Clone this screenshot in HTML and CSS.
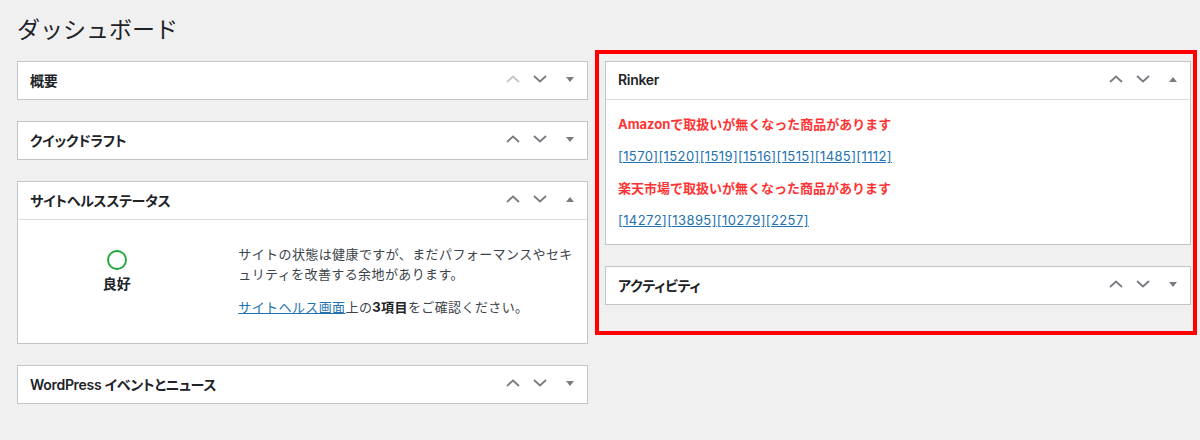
FILE: index.html
```html
<!DOCTYPE html>
<html lang="ja">
<head>
    <meta charset="UTF-8">
    <title>ダッシュボード</title>
    <link rel="stylesheet" href="styles.css">
</head>
<body>
<div class="wrap">
    <h1>ダッシュボード</h1>
    <div class="dashboard">
        <div class="column">
            <div class="postbox">
                <div class="postbox-header">
                    <h2>概要</h2>
                    <div class="handle-actions">
                        <span class="order-btn disabled"><svg width="14" height="8" viewBox="0 0 14 8"><polyline points="1,7 7,1.5 13,7"/></svg></span>
                        <span class="order-btn"><svg width="14" height="8" viewBox="0 0 14 8"><polyline points="1,1 7,6.5 13,1"/></svg></span>
                        <span class="toggle-btn"><svg width="8" height="5" viewBox="0 0 8 5"><polygon points="0,0 8,0 4,5"/></svg></span>
                    </div>
                </div>
            </div>
            <div class="postbox">
                <div class="postbox-header">
                    <h2>クイックドラフト</h2>
                    <div class="handle-actions">
                        <span class="order-btn"><svg width="14" height="8" viewBox="0 0 14 8"><polyline points="1,7 7,1.5 13,7"/></svg></span>
                        <span class="order-btn"><svg width="14" height="8" viewBox="0 0 14 8"><polyline points="1,1 7,6.5 13,1"/></svg></span>
                        <span class="toggle-btn"><svg width="8" height="5" viewBox="0 0 8 5"><polygon points="0,0 8,0 4,5"/></svg></span>
                    </div>
                </div>
            </div>
            <div class="postbox">
                <div class="postbox-header open">
                    <h2>サイトヘルスステータス</h2>
                    <div class="handle-actions">
                        <span class="order-btn"><svg width="14" height="8" viewBox="0 0 14 8"><polyline points="1,7 7,1.5 13,7"/></svg></span>
                        <span class="order-btn"><svg width="14" height="8" viewBox="0 0 14 8"><polyline points="1,1 7,6.5 13,1"/></svg></span>
                        <span class="toggle-btn"><svg width="8" height="5" viewBox="0 0 8 5"><polygon points="0,5 8,5 4,0"/></svg></span>
                    </div>
                </div>
                <div class="health-widget">
                    <div class="health-status">
                        <svg class="health-ring" width="20" height="20" viewBox="0 0 20 20"><circle cx="10" cy="10" r="9"/></svg>
                        <div class="health-label">良好</div>
                    </div>
                    <div class="health-text">
                        <p>サイトの状態は健康ですが、まだパフォーマンスやセキュリティを改善する余地があります。</p>
                        <p><a href="#">サイトヘルス画面</a>上の<strong>3項目</strong>をご確認ください。</p>
                    </div>
                </div>
            </div>
            <div class="postbox">
                <div class="postbox-header">
                    <h2>WordPress イベントとニュース</h2>
                    <div class="handle-actions">
                        <span class="order-btn"><svg width="14" height="8" viewBox="0 0 14 8"><polyline points="1,7 7,1.5 13,7"/></svg></span>
                        <span class="order-btn"><svg width="14" height="8" viewBox="0 0 14 8"><polyline points="1,1 7,6.5 13,1"/></svg></span>
                        <span class="toggle-btn"><svg width="8" height="5" viewBox="0 0 8 5"><polygon points="0,0 8,0 4,5"/></svg></span>
                    </div>
                </div>
            </div>
        </div>

        <!-- 赤枠で囲んだ右カラム -->
        <div class="column highlight">
            <div class="postbox">
                <div class="postbox-header open">
                    <h2>Rinker</h2>
                    <div class="handle-actions">
                        <span class="order-btn"><svg width="14" height="8" viewBox="0 0 14 8"><polyline points="1,7 7,1.5 13,7"/></svg></span>
                        <span class="order-btn"><svg width="14" height="8" viewBox="0 0 14 8"><polyline points="1,1 7,6.5 13,1"/></svg></span>
                        <span class="toggle-btn"><svg width="8" height="5" viewBox="0 0 8 5"><polygon points="0,5 8,5 4,0"/></svg></span>
                    </div>
                </div>
                <div class="rinker-body">
                    <p class="warning">Amazonで取扱いが無くなった商品があります</p>
                    <p class="items"><a href="#">[1570]</a><a href="#">[1520]</a><a href="#">[1519]</a><a href="#">[1516]</a><a href="#">[1515]</a><a href="#">[1485]</a><a href="#">[1112]</a></p>
                    <p class="warning">楽天市場で取扱いが無くなった商品があります</p>
                    <p class="items"><a href="#">[14272]</a><a href="#">[13895]</a><a href="#">[10279]</a><a href="#">[2257]</a></p>
                </div>
            </div>
            <div class="postbox">
                <div class="postbox-header">
                    <h2>アクティビティ</h2>
                    <div class="handle-actions">
                        <span class="order-btn"><svg width="14" height="8" viewBox="0 0 14 8"><polyline points="1,7 7,1.5 13,7"/></svg></span>
                        <span class="order-btn"><svg width="14" height="8" viewBox="0 0 14 8"><polyline points="1,1 7,6.5 13,1"/></svg></span>
                        <span class="toggle-btn"><svg width="8" height="5" viewBox="0 0 8 5"><polygon points="0,0 8,0 4,5"/></svg></span>
                    </div>
                </div>
            </div>
        </div>
    </div>
</div>
</body>
</html>
```

FILE: styles.css
```css
body {
    margin: 0;
    background-color: #f0f0f1;
    color: #3c434a;
    font-family: 'Inter', 'Noto Sans CJK JP', sans-serif;
    font-size: 13px;
}

.wrap {
    padding-left: 17px;
}

h1 {
    margin: 0;
    padding-top: 15px;
    font-size: 23px;
    font-weight: 400;
    line-height: 30px;
    color: #1d2327;
}

.dashboard {
    display: flex;
    align-items: flex-start;
    margin-top: 5px;
}

.column {
    width: 571px;
    margin-top: 11px;
    margin-right: 7px;
}

.highlight {
    width: 586px;
    margin-top: 0;
    margin-right: 0;
    padding: 7px 2px 26px 6px;
    border: 4px solid #ff0000;
}

.postbox {
    background-color: #fff;
    border: 1px solid #c3c4c7;
    margin-bottom: 21px;
}

.postbox:last-child {
    margin-bottom: 0;
}

.postbox-header {
    display: flex;
    align-items: center;
    height: 37px;
}

.postbox-header.open {
    border-bottom: 1px solid #dcdcde;
}

.postbox-header h2 {
    flex: 1;
    margin: 0 0 2px;
    padding-left: 12px;
    font-size: 14px;
    font-weight: 600;
    letter-spacing: -0.3px;
    color: #1d2327;
    font-feature-settings: "palt";
}

.handle-actions {
    display: flex;
    height: 100%;
    padding-bottom: 3px;
    box-sizing: border-box;
}

.order-btn,
.toggle-btn {
    display: flex;
    align-items: center;
    justify-content: center;
    width: 27px;
}

.toggle-btn {
    width: 34px;
}

.order-btn svg polyline {
    fill: none;
    stroke: #787c82;
    stroke-width: 1.8;
}

.order-btn.disabled svg polyline {
    stroke: #c3c4c7;
}

.toggle-btn svg polygon {
    fill: #787c82;
}

/* サイトヘルス */
.health-widget {
    display: flex;
    height: 123px;
    padding: 0 12px;
}

.health-status {
    width: 176px;
    padding-top: 30px;
    text-align: center;
}

.health-ring circle {
    fill: none;
    stroke: #1ea83a;
    stroke-width: 1.8;
}

.health-label {
    margin-top: 1px;
    font-size: 14px;
    font-weight: 600;
    line-height: 20px;
    color: #1d2327;
}

.health-text {
    width: 342px;
    margin-left: 35px;
    padding-top: 24px;
}

.health-text p {
    margin: 0 0 13px;
    line-height: 20px;
    letter-spacing: 0.4px;
}

.health-text strong {
    color: #1d2327;
}

a {
    color: #2271b1;
}

/* Rinker */
.rinker-body {
    padding: 14px 12px 14px;
}

.rinker-body p {
    margin: 0 0 12px;
    line-height: 20px;
}

.rinker-body p:last-child {
    margin-bottom: 0;
}

.items {
    letter-spacing: 0.4px;
}

.warning {
    font-weight: 700;
    color: #ff3333;
}
```
